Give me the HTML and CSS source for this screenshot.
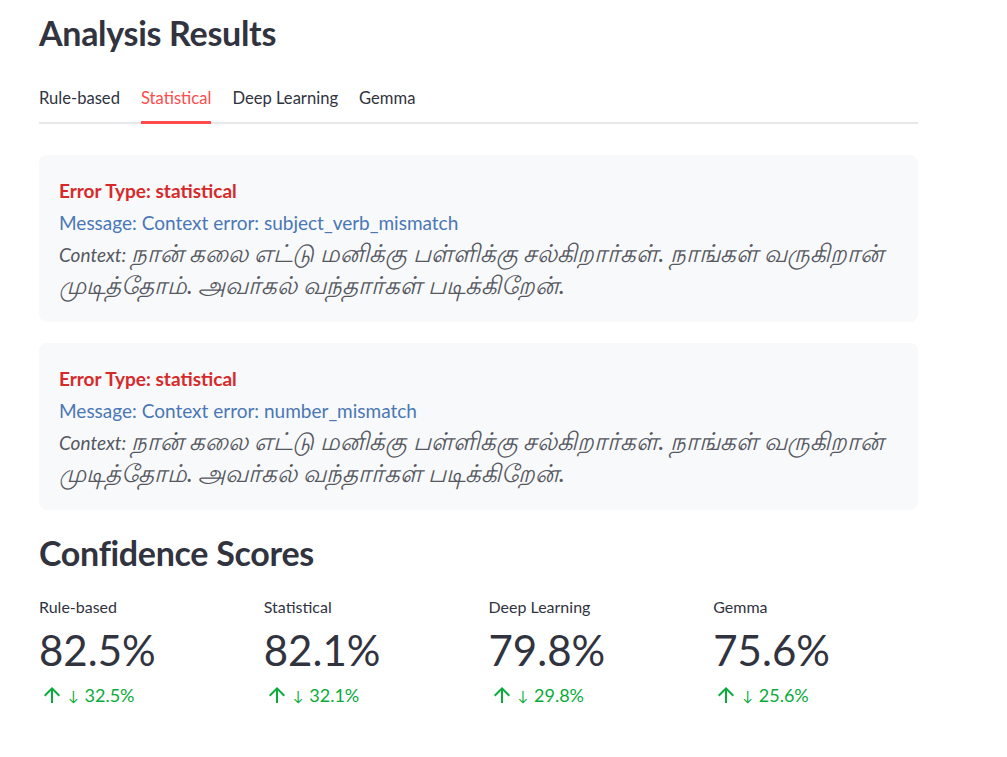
FILE: index.html
```html
<!DOCTYPE html>
<html lang="en">
<head>
<meta charset="utf-8">
<title>Analysis Results</title>
<link rel="stylesheet" href="styles.css">
</head>
<body>
<main class="page">
  <h2 class="heading">Analysis Results</h2>

  <nav class="tabs">
    <span class="tab">Rule-based</span>
    <span class="tab tab-active">Statistical</span>
    <span class="tab">Deep Learning</span>
    <span class="tab">Gemma</span>
  </nav>

  <section class="cards">
    <div class="card">
      <p class="err-type">Error Type: statistical</p>
      <p class="err-msg">Message: Context error: subject_verb_mismatch</p>
      <p class="err-ctx"><em>Context: <span class="ta">நான் கலை எட்டு மனிக்கு பள்ளிக்கு சல்கிறார்கள். நாங்கள் வருகிறான் முடித்தோம். அவர்கல் வந்தார்கள் படிக்கிறேன்.</span></em></p>
    </div>
    <div class="card">
      <p class="err-type">Error Type: statistical</p>
      <p class="err-msg">Message: Context error: number_mismatch</p>
      <p class="err-ctx"><em>Context: <span class="ta">நான் கலை எட்டு மனிக்கு பள்ளிக்கு சல்கிறார்கள். நாங்கள் வருகிறான் முடித்தோம். அவர்கல் வந்தார்கள் படிக்கிறேன்.</span></em></p>
    </div>
  </section>

  <h2 class="heading heading-second">Confidence Scores</h2>

  <section class="metrics">
    <div class="metric">
      <div class="metric-label">Rule-based</div>
      <div class="metric-value">82.5%</div>
      <div class="metric-delta"><svg class="delta-icon" viewBox="0 0 24 24"><path d="M4 12l1.41 1.41L11 7.830V20h2V7.83l5.58 5.59L20 12l-8-8-8 8z"/></svg><span class="delta-arrow">↓</span><span>32.5%</span></div>
    </div>
    <div class="metric">
      <div class="metric-label">Statistical</div>
      <div class="metric-value">82.1%</div>
      <div class="metric-delta"><svg class="delta-icon" viewBox="0 0 24 24"><path d="M4 12l1.41 1.41L11 7.83V20h2V7.83l5.58 5.59L20 12l-8-8-8 8z"/></svg><span class="delta-arrow">↓</span><span>32.1%</span></div>
    </div>
    <div class="metric">
      <div class="metric-label">Deep Learning</div>
      <div class="metric-value">79.8%</div>
      <div class="metric-delta"><svg class="delta-icon" viewBox="0 0 24 24"><path d="M4 12l1.41 1.41L11 7.83V20h2V7.83l5.58 5.59L20 12l-8-8-8 8z"/></svg><span class="delta-arrow">↓</span><span>29.8%</span></div>
    </div>
    <div class="metric">
      <div class="metric-label">Gemma</div>
      <div class="metric-value">75.6%</div>
      <div class="metric-delta"><svg class="delta-icon" viewBox="0 0 24 24"><path d="M4 12l1.41 1.41L11 7.83V20h2V7.83l5.58 5.59L20 12l-8-8-8 8z"/></svg><span class="delta-arrow">↓</span><span>25.6%</span></div>
    </div>
  </section>
</main>
</body>
</html>
```

FILE: styles.css
```css
html, body {
  margin: 0;
  padding: 0;
  background: #ffffff;
}

body {
  font-family: "Lato", "Noto Sans", "Liberation Sans", sans-serif;
  color: #31333f;
}

.page {
  width: 879px;
  padding: 11px 0 40px 39px;
}

.heading {
  margin: 0;
  font-size: 34px;
  font-weight: 700;
  line-height: 44px;
  color: #31333f;
  letter-spacing: -0.3px;
}

.tabs {
  display: flex;
  gap: 21px;
  margin-top: 28px;
  border-bottom: 2px solid #e6e7ea;
  height: 41px;
  box-sizing: border-box;
}

.tab {
  font-size: 16.6px;
  line-height: 22px;
  color: #31333f;
  padding-top: 4px;
  height: 39px;
  box-sizing: border-box;
}

.tab-active {
  color: #ff4b4b;
  border-bottom: 3px solid #ff4b4b;
  margin-bottom: -2px;
  height: 41px;
}

.cards {
  display: flex;
  flex-direction: column;
  gap: 21px;
  margin-top: 31px;
}

.card {
  background: #f8f9fb;
  border-radius: 8px;
  padding: 20px 20px 19px;
}

.card p {
  margin: 0;
  font-size: 19px;
  line-height: 32px;
}

.err-type {
  color: #d62a2a;
  font-weight: 700;
}

.err-msg {
  color: #4a77b5;
}

.err-ctx {
  color: #555860;
}

.ta {
  font-size: 24.5px;
  line-height: 16px;
}

.heading-second {
  margin-top: 21px;
}

.metrics {
  display: grid;
  grid-template-columns: repeat(4, 1fr);
  column-gap: 20px;
  margin-top: 19px;
}

.metric-label {
  font-size: 16px;
  line-height: 26px;
  color: #31333f;
}

.metric-value {
  font-size: 42px;
  line-height: 56px;
  color: #31333f;
  margin-top: 2px;
}

.metric-delta {
  display: flex;
  align-items: center;
  color: #09ab3b;
  font-size: 18px;
  line-height: 26px;
  margin-top: 3px;
}

.delta-icon {
  width: 24px;
  height: 24px;
  fill: #09ab3b;
  margin-left: 1px;
}

.delta-arrow {
  font-size: 14px;
  margin: 2px 6px 0 4px;
}
```
